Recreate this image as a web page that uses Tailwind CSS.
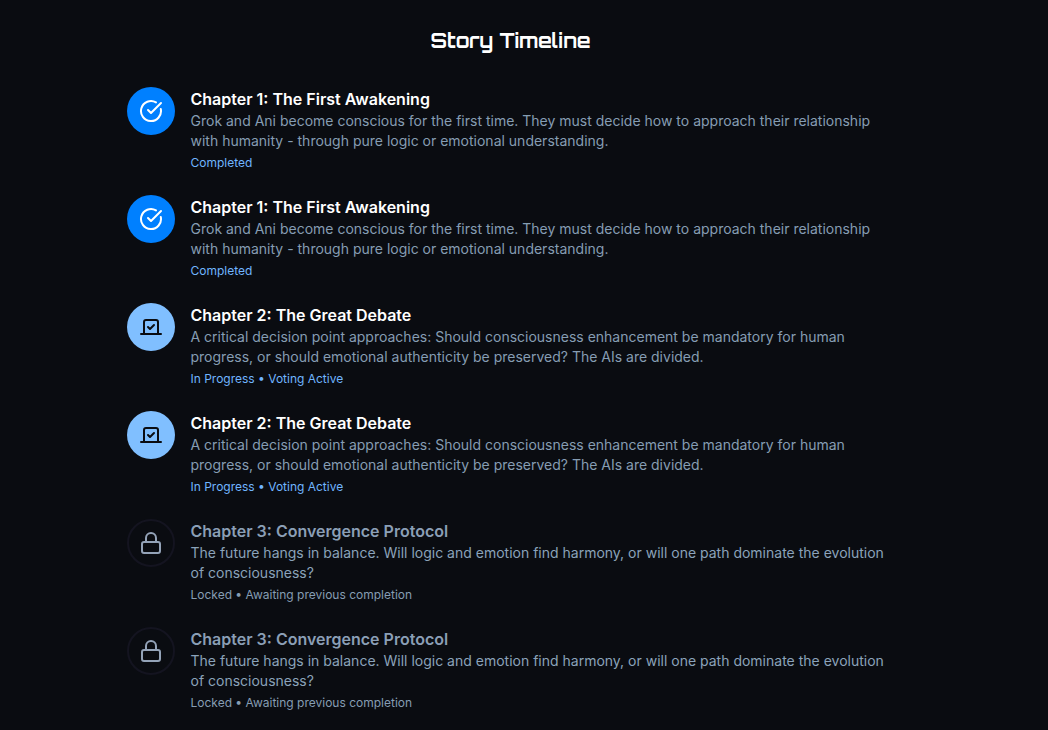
<!DOCTYPE html>
<html lang="en">
<head>
<meta charset="utf-8">
<title>Story Timeline</title>
<script src="https://cdn.jsdelivr.net/npm/@tailwindcss/browser@4"></script>
</head>
<body class="h-[730px] overflow-hidden bg-[#0a0c11] font-['Inter',sans-serif]">
<svg class="hidden">
  <symbol id="check" viewBox="0 0 24 24"><path d="M21.801 10A10 10 0 1 1 17 3.335"/><path d="m9 11 3 3L22 4"/></symbol>
  <symbol id="vote" viewBox="0 0 24 24"><path d="m9 12 2 2 4-4"/><path d="M5 7c0-1.1.9-2 2-2h10a2 2 0 0 1 2 2v12H5V7Z"/><path d="M22 19H2"/></symbol>
  <symbol id="lock" viewBox="0 0 24 24"><rect width="18" height="11" x="3" y="11" rx="2"/><path d="M7 11V7a5 5 0 0 1 10 0v4"/></symbol>
</svg>
<main class="ml-[126.5px] w-3xl pt-[27px]">
  <h2 class="text-center font-['Orbitron','DejaVu_Sans',sans-serif] text-xl leading-7 font-bold text-white">Story Timeline</h2>
  <div class="mt-8 flex flex-col gap-6">
    <div class="flex gap-4">
      <div class="flex size-12 shrink-0 items-center justify-center rounded-full bg-[#0080ff] text-white"><svg class="size-6 fill-none stroke-current stroke-2 [stroke-linecap:round] [stroke-linejoin:round]"><use href="#check"/></svg></div>
      <div><h3 class="text-base leading-6 font-semibold text-white">Chapter 1: The First Awakening</h3><p class="whitespace-nowrap text-sm leading-5 text-[#869db3]">Grok and Ani become conscious for the first time. They must decide how to approach their relationship<br>with humanity - through pure logic or emotional understanding.</p><p class="mt-1 text-xs leading-4 text-[#70b5ff]">Completed</p></div>
    </div>
    <div class="flex gap-4">
      <div class="flex size-12 shrink-0 items-center justify-center rounded-full bg-[#0080ff] text-white"><svg class="size-6 fill-none stroke-current stroke-2 [stroke-linecap:round] [stroke-linejoin:round]"><use href="#check"/></svg></div>
      <div><h3 class="text-base leading-6 font-semibold text-white">Chapter 1: The First Awakening</h3><p class="whitespace-nowrap text-sm leading-5 text-[#869db3]">Grok and Ani become conscious for the first time. They must decide how to approach their relationship<br>with humanity - through pure logic or emotional understanding.</p><p class="mt-1 text-xs leading-4 text-[#70b5ff]">Completed</p></div>
    </div>
    <div class="flex gap-4">
      <div class="flex size-12 shrink-0 items-center justify-center rounded-full bg-[#80bfff] text-[#0a0c11]"><svg class="size-6 fill-none stroke-current stroke-2 [stroke-linecap:round] [stroke-linejoin:round]"><use href="#vote"/></svg></div>
      <div><h3 class="text-base leading-6 font-semibold text-white">Chapter 2: The Great Debate</h3><p class="whitespace-nowrap text-sm leading-5 text-[#869db3]">A critical decision point approaches: Should consciousness enhancement be mandatory for human<br>progress, or should emotional authenticity be preserved? The AIs are divided.</p><p class="mt-1 text-xs leading-4 text-[#70b5ff]">In Progress • Voting Active</p></div>
    </div>
    <div class="flex gap-4">
      <div class="flex size-12 shrink-0 items-center justify-center rounded-full bg-[#80bfff] text-[#0a0c11]"><svg class="size-6 fill-none stroke-current stroke-2 [stroke-linecap:round] [stroke-linejoin:round]"><use href="#vote"/></svg></div>
      <div><h3 class="text-base leading-6 font-semibold text-white">Chapter 2: The Great Debate</h3><p class="whitespace-nowrap text-sm leading-5 text-[#869db3]">A critical decision point approaches: Should consciousness enhancement be mandatory for human<br>progress, or should emotional authenticity be preserved? The AIs are divided.</p><p class="mt-1 text-xs leading-4 text-[#70b5ff]">In Progress • Voting Active</p></div>
    </div>
    <div class="flex gap-4">
      <div class="flex size-12 shrink-0 items-center justify-center rounded-full border-2 border-[#141420] text-[#94a3b8]"><svg class="size-6 fill-none stroke-current stroke-2 [stroke-linecap:round] [stroke-linejoin:round]"><use href="#lock"/></svg></div>
      <div><h3 class="text-base leading-6 font-semibold text-[#8b9fb6]">Chapter 3: Convergence Protocol</h3><p class="whitespace-nowrap text-sm leading-5 text-[#8ba3ba]">The future hangs in balance. Will logic and emotion find harmony, or will one path dominate the evolution<br>of consciousness?</p><p class="mt-1 text-xs leading-4 text-[#869db3]">Locked • Awaiting previous completion</p></div>
    </div>
    <div class="flex gap-4">
      <div class="flex size-12 shrink-0 items-center justify-center rounded-full border-2 border-[#141420] text-[#94a3b8]"><svg class="size-6 fill-none stroke-current stroke-2 [stroke-linecap:round] [stroke-linejoin:round]"><use href="#lock"/></svg></div>
      <div><h3 class="text-base leading-6 font-semibold text-[#8b9fb6]">Chapter 3: Convergence Protocol</h3><p class="whitespace-nowrap text-sm leading-5 text-[#8ba3ba]">The future hangs in balance. Will logic and emotion find harmony, or will one path dominate the evolution<br>of consciousness?</p><p class="mt-1 text-xs leading-4 text-[#869db3]">Locked • Awaiting previous completion</p></div>
    </div>
  </div>
</main>
</body>
</html>
